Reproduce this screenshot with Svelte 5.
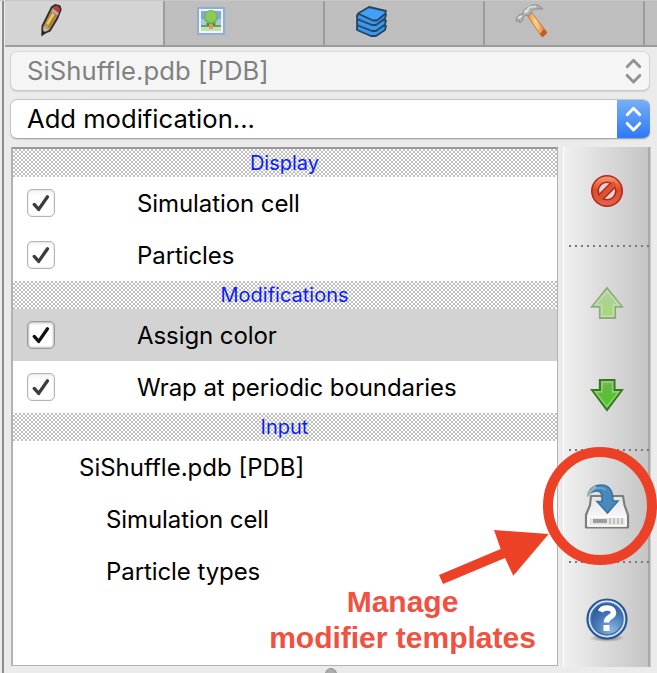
<script>
  const groups = [
    { title: 'Display', kind: 'checked', items: [{ label: 'Simulation cell' }, { label: 'Particles' }] },
    { title: 'Modifications', kind: 'checked', items: [{ label: 'Assign color', selected: true }, { label: 'Wrap at periodic boundaries' }] },
    { title: 'Input', kind: 'plain', items: [{ label: 'SiShuffle.pdb [PDB]' }, { label: 'Simulation cell', child: true }, { label: 'Particle types', child: true }] }
  ];
</script>

{#snippet chevrons(color)}
  <svg class="chev" width="33" height="40" viewBox="0 0 33 40" fill="none" stroke={color} stroke-width="2.9" stroke-linecap="round" stroke-linejoin="round">
    <path d="M10.2 15.8 16.5 9.3l6.3 6.5M10.2 24.4l6.3 6.5 6.3-6.5" />
  </svg>
{/snippet}

<div class="window">
  <nav class="tabs">
    <div class="tab active">
      <svg width="26" height="34" viewBox="0 0 26 34">
        <path d="M4.3 31.5 4.5 23 13.8 4.3l3.5-2.2 4.2.9 1.2 3.5L19 15.8l-7.2 12-4.6 1.8z" fill="#c69a62" stroke="#33302e" stroke-width="2" />
        <path d="m5.5 23.5 5 3.6-5.3 2.6z" fill="#c5b4a5" />
        <path d="m7.2 21 7.3-14.5 5.3 4.2-8 15z" fill="#a9803e" />
        <path d="m8.4 20 6-10 2.1 1.7-6.6 11z" fill="#efc75e" />
        <path d="m13.2 8.4 6.6 4.2 1-2.4-6.3-4.2z" fill="#b5aaa6" />
        <path d="m15 5.5 2.6-2.4 3.3 1 .8 2.5-1.4 3z" fill="#bd3a32" />
        <path d="m4.2 31.8 3.5-2.2-3.1-2z" fill="#202020" />
      </svg>
    </div>
    <div class="tab">
      <svg width="28" height="28" viewBox="0 0 28 28">
        <rect x="1" y="1" width="26" height="26" fill="#f1f6fc" stroke="#8fadd9" stroke-width="2" />
        <rect x="4" y="4" width="20" height="19" fill="#7fa8e0" />
        <path d="M4 12h20v6H4z" fill="#a3c6ee" />
        <path d="M4 18h20v2H4z" fill="#65a83d" /><path d="M4 20h20v4H4z" fill="#c5dfb8" />
        <ellipse cx="14" cy="17" rx="4.5" ry="1.5" fill="#537634" />
        <path d="M12 17h4v5h-4z" fill="#d89a62" />
        <circle cx="14" cy="10" r="7" fill="#71b643" /><circle cx="14" cy="9.5" r="5.6" fill="#8ccb5a" />
      </svg>
    </div>
    <div class="tab">
      <svg width="34" height="34" viewBox="0 0 34 34" stroke="#23455f" stroke-width="1.8" stroke-linejoin="round">
        <path d="m2 22 12-3 17 3-1 4-9 6-5 0L2 26z" fill="#3b96ec" />
        <path d="m2 16.500 12-3 17 3-1 4-9 6.500h-4L2 21z" fill="#3b96ec" />
        <path d="m2 11 12-3 17 2.500-1 4-9 6.500h-4L2 15z" fill="#3b96ec" />
        <path d="M3 9.500 14 3l17 4-1 3-8 6.500h-4z" fill="#43a0f8" />
      </svg>
    </div>
    <div class="tab">
      <svg width="34" height="34" viewBox="0 0 34 34">
        <defs><linearGradient id="wood"><stop stop-color="#de9139" /><stop offset=".45" stop-color="#ffd293" /><stop offset="1" stop-color="#d16b26" /></linearGradient></defs>
        <path d="m12 11 5-2L32 28.500 27 33z" fill="url(#wood)" stroke="#c87932" />
        <path d="m25 30 4-5 3 4-4 4z" fill="#c45b1d" />
        <path d="m1 14 4-4 2 1 2-5 8-5h6l5 4h-8l-4 3-2 4-3-1-3 2v3l-3 3-1-3-2 2z" fill="#aeb1b2" stroke="#8c8f90" />
        <path d="m9 8 6-5 6-.500M3 14l4-2M10 9l4-3" fill="none" stroke="#e3e6e6" stroke-width="1.400" />
      </svg>
    </div>
    <div class="tab rest"></div>
  </nav>

  <div class="combos">
    <div class="combo disabled"><span>SiShuffle.pdb [PDB]</span>{@render chevrons('#929292')}</div>
    <div class="combo"><span class="action">Add modification...</span><div class="drop">{@render chevrons('#fff')}</div></div>
  </div>

  <main>
    <section class="list">
      {#each groups as group}
        <h2>{group.title}</h2>
        {#each group.items as item}
          <div class="row {group.kind}" class:selected={item.selected} class:child={item.child}>
            {#if group.kind === 'checked'}
              <i class="box"><svg width="26" height="26" viewBox="0 0 26 26" fill="none" stroke={item.selected ? '#111' : '#3c3c3c'} stroke-width="3.3" stroke-linecap="round" stroke-linejoin="round"><path d="m6.2 14.4 4.500 5 8.800-12.600" /></svg></i>
            {/if}
            <span>{item.label}</span>
          </div>
        {/each}
      {/each}
    </section>

    <aside>
      <div class="tool first">
        <svg width="34" height="34" viewBox="0 0 34 34">
          <defs><linearGradient id="ban" x2="0" y2="1"><stop stop-color="#f18b69" /><stop offset=".45" stop-color="#df4c26" /><stop offset="1" stop-color="#e0604a" /></linearGradient></defs>
          <circle cx="17" cy="17" r="12" fill="#e0d5d2" stroke="#b3261a" stroke-width="8" />
          <path d="M9 25 25 9" stroke="#b3261a" stroke-width="7.500" />
          <circle cx="17" cy="17" r="12" fill="none" stroke="url(#ban)" stroke-width="4.800" />
          <path d="M9 25 25 9" stroke="#dd5230" stroke-width="4.600" />
        </svg>
      </div>
      <div class="dots"></div>
      <div class="tool arrows">
        <svg width="34" height="34" viewBox="0 0 34 34">
          <defs><linearGradient id="up" x2=".7" y2="1"><stop stop-color="#c2d8b6" /><stop offset=".35" stop-color="#b0cf9c" /><stop offset="1" stop-color="#a2dd6d" /></linearGradient></defs>
          <path d="M17 2 32 20.800h-6.900v11.300H9.900V20.800H2z" fill="url(#up)" stroke="#8bad78" stroke-width="2" />
          <path d="m17 5 12 14h-5.500v11.300h-12V19H5.300z" fill="none" stroke="#c5dcb9" stroke-width="1.600" />
        </svg>
        <svg width="34" height="34" viewBox="0 0 34 34">
          <defs><linearGradient id="down" x2=".5" y2="1"><stop stop-color="#94cb7a" /><stop offset=".4" stop-color="#63b741" /><stop offset="1" stop-color="#4bce24" /></linearGradient></defs>
          <path d="M9.900 2h14.600v10h7.500L17 32 2 12h7.900z" fill="url(#down)" stroke="#37791f" stroke-width="2.100" />
          <path d="M11.800 3.900h10.800v10h6L17 28.700 5.400 13.900h6.400z" fill="none" stroke="#93cd76" stroke-width="1.600" />
        </svg>
      </div>
      <div class="dots"></div>
      <div class="tool save">
        <svg width="46" height="48" viewBox="0 0 46 48">
          <defs><linearGradient id="disk" x2="0" y2="1"><stop stop-color="#e4e4e4" /><stop offset="1" stop-color="#fff" /></linearGradient></defs>
          <path d="M7 13h32l1.500 9L44 32v12.500H2V32l4-10z" fill="url(#disk)" stroke="#7d7e7a" stroke-width="2.200" stroke-linejoin="round" />
          <path d="M4.500 34h37v9h-37z" fill="#e6e6e4" stroke="#fff" stroke-width="1.400" />
          <path d="M9 36h14v4H9z" fill="#9c9c9c" />
          <path d="M26 35v6M30 35v6M34 35v6M38 35v6" stroke="#c2c2c0" stroke-width="2" />
          <path d="M4 12C5 6 10 2 17 2c8 0 12 5 12 16h5L23.500 30 13 18.500h5C18 12 18 8 13 8c-4 0-7 2-9 4z" fill="#4788bd" stroke="#3b719d" stroke-width="1.500" />
          <path d="M6 10C9 5 16 3 22 7" fill="none" stroke="#6fa5cd" stroke-width="1.600" />
          <path d="M4 13C5 9 7 6 12 3.500" fill="none" stroke="#9db5b0" stroke-width="2.500" />
        </svg>
      </div>
      <div class="dots"></div>
      <div class="tool help">
        <svg width="46" height="48" viewBox="0 0 46 48">
          <defs><radialGradient id="ball" cx=".65" cy=".85" r=".85"><stop stop-color="#8bb6df" /><stop offset=".6" stop-color="#4577b7" /><stop offset="1" stop-color="#2b5796" /></radialGradient>
          <radialGradient id="shade"><stop stop-color="#666" /><stop offset="1" stop-color="#777" stop-opacity="0" /></radialGradient></defs>
          <ellipse cx="23" cy="42" rx="18" ry="4" fill="url(#shade)" />
          <circle cx="23" cy="23" r="19.500" fill="#dce7f5" stroke="#28569a" stroke-width="2.200" />
          <circle cx="23" cy="23" r="16" fill="url(#ball)" stroke="#3e70b0" stroke-width="1.500" />
          <path d="M16.500 15.500c2-5 13-4.500 13 1 0 5-7 4-7 10" fill="none" stroke="#fff" stroke-width="5.600" /><path d="M19.500 29h6v6h-6z" fill="#fff" />
        </svg>
      </div>
    </aside>
  </main>
  <i class="handle"></i>

  <svg class="annotation" width="657" height="673" viewBox="0 0 657 673">
    <ellipse cx="600" cy="506" rx="52" ry="54" fill="none" stroke="#ec4126" stroke-width="10" />
    <path d="m439 575 61.700-26-6.700-19 54.700 4-35.400 41.700-8.300-17.700-62 26z" fill="#ec4126" />
  </svg>
  <p class="callout"><span>Manage</span><span>modifier templates</span></p>
</div>

<style>
  :global(body) { margin: 0; }
  .window { position: relative; box-sizing: border-box; width: 657px; height: 673px; overflow: hidden; padding-left: 5px; border-top: 1px solid #c8c8c8; background: linear-gradient(90deg, #ececec 2px, #8e8e8e 2px 4px, #ebebeb 4px); font-family: Inter, "Liberation Sans", sans-serif; color: #000; }
  .tabs { display: flex; height: 44px; border-bottom: 2px solid #9c9c9c; }
  .tab { box-sizing: border-box; width: 160px; flex: none; border-right: 2px solid #9c9c9c; background: #bebebe; padding: 6px 0 0 32px; }
  .tab:nth-child(1) { padding: 2px 0 0 33px; }
  .tab:nth-child(3), .tab:nth-child(4) { padding: 3px 0 0 30px; }
  .tab.active { background: #d4d4d4; }
  .tab.rest { border: 0; }
  .tab svg { display: block; }
  .combos { display: flex; flex-direction: column; gap: 8px; padding: 4px 7px 0 5px; }
  .combo { box-sizing: border-box; height: 40px; width: 640px; display: flex; justify-content: space-between; align-items: center; border: 1px solid #c4c4c4; border-bottom-color: #a9a9a9; border-radius: 7px; background: #fff; padding-left: 16px; font-size: 25.600px; overflow: hidden; box-shadow: 0 1px 1px #d4d4d4; }
  .combo:not(.disabled) { border-right: 0; }
  .combo.disabled { color: #808080; background: #f5f5f5; border-color: #dadada #d2d2d2 #c8c8c8; }
  .combo.disabled .chev { margin-right: -1px; }
  .combo span { white-space: pre; letter-spacing: .08px; padding-bottom: 2px; }
  .combo .action { letter-spacing: 0; }
  .chev { display: block; flex: none; }
  .drop { width: 33px; height: 40px; flex: none; background: linear-gradient(#78b1f4, #2d77f8); }
  main { display: flex; gap: 5px; margin: 8px 0 0 6px; height: 520px; }
  .list { box-sizing: border-box; width: 547px; height: 519px; border: 1px solid #b2b2b2; border-top: 2px solid #989898; border-left-width: 2px; background: #fff; font-size: 24px; }
  h2 { margin: 0; height: 28px; padding-right: 1px; text-align: center; color: #0b1cff; font-weight: 400; font-size: 20px; line-height: 28px; background: repeating-conic-gradient(#c0c0c0 0 25%, #fff 0 50%) 0 0 / 4px 4px; }
  .row { height: 52px; display: flex; align-items: center; white-space: pre; letter-spacing: -.08px; }
  .row.selected { background: #d3d3d3; }
  .checked { padding-left: 14px; gap: 82px; }
  .plain { padding-left: 66px; letter-spacing: 0; }
  .plain.child { padding-left: 93px; letter-spacing: -.08px; }
  .box { box-sizing: border-box; width: 28px; height: 28px; border: 1px solid #b5b5b5; border-radius: 5px; background: linear-gradient(#f4f4f4, #fff 25%); box-shadow: inset 0 0 2px #ccc; }
  .box svg { display: block; }
  .selected .box { border-color: #999; box-shadow: inset 0 0 2px 1px #bbb; }
  aside { box-sizing: border-box; width: 88px; height: 520px; border-left: 1px solid #fff; border-right: 1px solid #c8c8c8; background: linear-gradient(90deg, transparent 84px, #aaa 84px), linear-gradient(90deg, #f0f0f0, #dedede 40%, #c4c4c4); }
  .tool { display: flex; flex-direction: column; align-items: center; box-sizing: border-box; }
  .tool svg { display: block; flex: none; }
  .first { height: 98px; padding-top: 27px; }
  .arrows { height: 202px; padding-top: 39px; gap: 58px; }
  .save { height: 110px; padding-top: 32px; }
  .help { padding-top: 33px; }
  .dots { height: 2px; margin-left: 5px; background: repeating-linear-gradient(90deg, #777 0 2px, transparent 2px 6px); }
  .handle { position: absolute; left: 325px; top: 667px; width: 12px; height: 12px; border-radius: 50%; background: #adadad; box-sizing: border-box; border: 1px solid #929292; }
  .annotation { position: absolute; left: 0; top: -1px; pointer-events: none; }
  .callout { position: absolute; left: 262px; top: 583px; width: 281px; margin: 0; text-align: center; font: bold 30px/36px "Liberation Sans", Arial, sans-serif; color: #f05140; white-space: pre; }
  .callout span { display: block; }
</style>
